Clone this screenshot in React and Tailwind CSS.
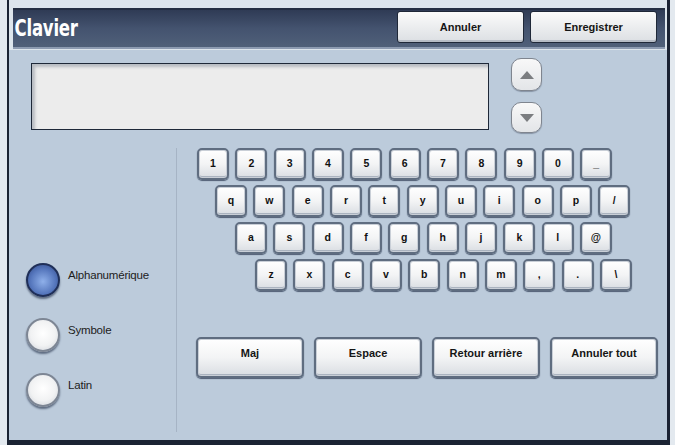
import React, { useState } from "react";

const rows = [
  { pad: "pl-[20px]", keys: ["1", "2", "3", "4", "5", "6", "7", "8", "9", "0", "_"] },
  { pad: "pl-[38px]", keys: ["q", "w", "e", "r", "t", "y", "u", "i", "o", "p", "/"] },
  { pad: "pl-[58px]", keys: ["a", "s", "d", "f", "g", "h", "j", "k", "l", "@"] },
  { pad: "pl-[78px]", keys: ["z", "x", "c", "v", "b", "n", "m", ",", ".", "\\"] },
];

const modes = ["Alphanumérique", "Symbole", "Latin"];

const keyFace =
  "rounded-[5px] border-2 border-[#5f6d80] bg-linear-to-b from-[#ffffff] via-[#f3f4f5] to-[#d9dde2] shadow-[inset_0_0_0_1px_#c9cfd7,inset_0_-2px_0_#aab3bf,0_1px_1px_#4f5d73]";

function Key({ label, onPress }) {
  return (
    <button
      onClick={() => onPress(label)}
      className={`w-[32px] h-[32px] flex items-center justify-center text-[10.5px] font-bold text-[#111] ${keyFace}`}
    >
      {label}
    </button>
  );
}

function Radio({ label, active, onClick }) {
  return (
    <div className="flex items-start h-[34px] cursor-pointer" onClick={onClick}>
      {active ? (
        <span className="w-[34px] h-[34px] rounded-full border-2 border-[#1f2f58] bg-[radial-gradient(circle_at_50%_55%,#8fb0ea_0%,#5677bd_55%,#2d4584_100%)] shadow-[0_2px_2px_#5d6b80]" />
      ) : (
        <span className="w-[34px] h-[34px] rounded-full border-2 border-[#7d8694] bg-[radial-gradient(circle_at_50%_45%,#ffffff_0%,#f1f2f3_55%,#c9ced6_100%)] shadow-[0_2px_2px_#5d6b80]" />
      )}
      <span className="ml-[8px] mt-[5px] leading-[14px] text-[11.5px] text-[#1c1c1c] tracking-[-0.2px]">
        {label}
      </span>
    </div>
  );
}

export default function App() {
  const [text, setText] = useState("");
  const [mode, setMode] = useState(0);

  const press = (k) => setText((t) => t + k);

  return (
    <div
      className="w-[675px] h-[445px] bg-[#e3e9ef] flex overflow-hidden"
      style={{ fontFamily: '"Liberation Sans", Arial, sans-serif' }}
    >
      <div className="ml-[7px] w-[663px] h-full flex flex-col border-l-2 border-r-[3px] border-b-[5px] border-[#1b2333] bg-[#bccbdb]">
        {/* title bar */}
        <div className="h-[50px] bg-[#dde5ec] pt-[1px]">
          <div className="ml-[4px] mr-[2px] mt-[7px] h-[39px] flex items-center justify-between pr-[8px] bg-linear-to-b from-[#2f3b55] via-[#44536f] to-[#506079] border-t-2 border-[#252f42] shadow-[0_2px_0_#8d9bb1]">
            <h1
              className="pl-[2px] text-white font-bold text-[23px] leading-none tracking-[-0.3px] scale-x-[0.8] origin-left"
              style={{ fontFamily: '"Liberation Sans Narrow", "DejaVu Sans Condensed", Arial, sans-serif' }}
            >
              Clavier
            </h1>
            <div className="flex gap-[6px] mt-[-3px]">
              <button className="w-[127px] h-[32px] rounded-[3px] border border-[#1f2838] bg-linear-to-b from-[#fbfbfb] to-[#dcdfe3] shadow-[inset_0_-2px_0_#b7bdc6] text-[11px] font-bold text-[#151515]">
                Annuler
              </button>
              <button className="w-[127px] h-[32px] rounded-[3px] border border-[#1f2838] bg-linear-to-b from-[#fbfbfb] to-[#dcdfe3] shadow-[inset_0_-2px_0_#b7bdc6] text-[11px] font-bold text-[#151515]">
                Enregistrer
              </button>
            </div>
          </div>
        </div>

        {/* input line and scroll arrows */}
        <div className="flex pt-[8px]">
          <div className="ml-[22px] mt-[5px] w-[458px] h-[67px] border border-[#1e2838] bg-[#ececec] shadow-[inset_3px_3px_3px_#b8bcc2] px-[8px] py-[6px] text-[13px] text-[#111] overflow-hidden break-all">
            {text}
          </div>
          <div className="ml-[22px] flex flex-col gap-[11px]">
            <button className="w-[31px] h-[33px] rounded-[10px] border border-[#7f858f] bg-linear-to-b from-[#f8f8f8] to-[#e3e5e8] shadow-[0_1px_1px_#8794a6] flex items-center justify-center">
              <svg width="14" height="8" viewBox="0 0 14 8">
                <path d="M7 0 L14 8 L0 8 Z" fill="#7b7d80" />
              </svg>
            </button>
            <button className="w-[31px] h-[31px] rounded-[10px] border border-[#7f858f] bg-linear-to-b from-[#f8f8f8] to-[#e3e5e8] shadow-[0_1px_1px_#8794a6] flex items-center justify-center">
              <svg width="14" height="8" viewBox="0 0 14 8">
                <path d="M0 0 L14 0 L7 8 Z" fill="#7b7d80" />
              </svg>
            </button>
          </div>
        </div>

        <div className="flex mt-[15px] h-[284px]">
          {/* character set */}
          <div className="w-[168px] border-r border-[#a6b4c5] pl-[17px] pt-[115px] flex flex-col gap-[21px]">
            {modes.map((m, i) => (
              <Radio key={m} label={m} active={mode === i} onClick={() => setMode(i)} />
            ))}
          </div>

          {/* keys */}
          <div className="flex-1 flex flex-col">
            <div className="flex flex-col gap-[5px]">
              {rows.map((r, i) => (
                <div key={i} className={`flex gap-[6.33px] ${r.pad}`}>
                  {r.keys.map((k) => (
                    <Key key={k} label={k} onPress={press} />
                  ))}
                </div>
              ))}
            </div>
            <div className="flex gap-[10px] pl-[19px] mt-[46px]">
              {[
                { l: "Maj", f: () => {} },
                { l: "Espace", f: () => press(" ") },
                { l: "Retour arrière", f: () => setText((t) => t.slice(0, -1)) },
                { l: "Annuler tout", f: () => setText("") },
              ].map((b) => (
                <button
                  key={b.l}
                  onClick={b.f}
                  className={`w-[108px] h-[41px] flex justify-center pt-[7px] text-[11px] leading-[14px] font-bold text-[#151515] ${keyFace}`}
                >
                  {b.l}
                </button>
              ))}
            </div>
          </div>
        </div>
      </div>
    </div>
  );
}
